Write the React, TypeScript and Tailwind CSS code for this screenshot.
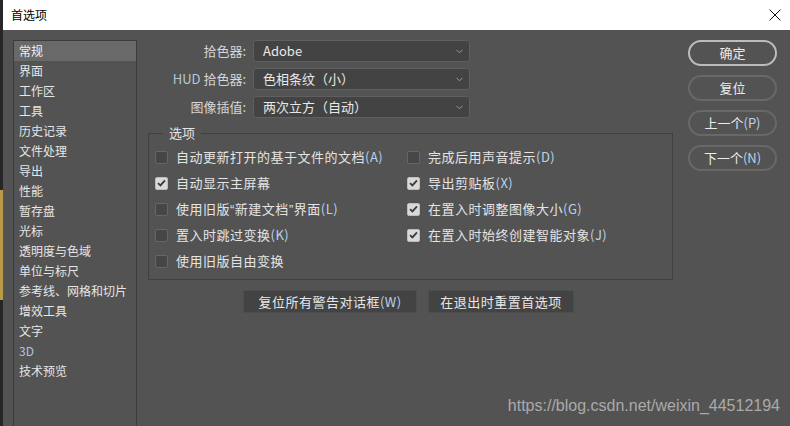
import React from "react";

const font = { fontFamily: '"Noto Sans CJK SC", "Noto Sans", sans-serif' };
const latin = { fontFamily: '"Liberation Sans", Arial, sans-serif' };

const sidebar = [
  "常规",
  "界面",
  "工作区",
  "工具",
  "历史记录",
  "文件处理",
  "导出",
  "性能",
  "暂存盘",
  "光标",
  "透明度与色域",
  "单位与标尺",
  "参考线、网格和切片",
  "增效工具",
  "文字",
  "3D",
  "技术预览",
];

const leftOpts: [React.ReactNode, string | null, boolean][] = [
  ["自动更新打开的基于文件的文档", "(A)", false],
  ["自动显示主屏幕", null, true],
  [
    <>
      使用旧版<span style={latin}>“</span>新建文档<span style={latin}>”</span>界面
    </>,
    "(L)",
    false,
  ],
  ["置入时跳过变换", "(K)", false],
  ["使用旧版自由变换", null, false],
];

const rightOpts: [React.ReactNode, string | null, boolean][] = [
  ["完成后用声音提示", "(D)", false],
  ["导出剪贴板", "(X)", true],
  ["在置入时调整图像大小", "(G)", true],
  ["在置入时始终创建智能对象", "(J)", true],
];

function Key({ k }: { k: string | null }) {
  if (!k) return null;
  return <span className="text-[#b9d2ec]">{k}</span>;
}

function Check({ label, k, on }: { label: React.ReactNode; k: string | null; on: boolean }) {
  return (
    <div className="flex items-center gap-[8px] h-[26px]">
      {on ? (
        <div className="w-[13px] h-[13px] rounded-[2px] bg-[#d9d9d9] border border-[#bdbdbd] flex items-center justify-center">
          <svg width="9" height="8" viewBox="0 0 9 8">
            <path d="M1 4.2 L3.4 6.4 L8 1.3" fill="none" stroke="#3a3a3a" strokeWidth="1.8" />
          </svg>
        </div>
      ) : (
        <div className="w-[13px] h-[13px] rounded-[2px] bg-[#464646] border border-[#666666]" />
      )}
      <span className="text-[13px] text-[#e4e4e4] tracking-[0.5px]">
        {label}
        <Key k={k} />
      </span>
    </div>
  );
}

function Select({ label, value }: { label: React.ReactNode; value: string }) {
  return (
    <div className="flex items-center h-[22px]">
      <div className="w-[99px] text-right text-[13px] text-[#d6d6d6] pr-[1px]">{label}</div>
      <div className="ml-[6px] w-[217px] h-[22px] rounded-[3px] bg-[#434343] border border-[#5f5f5f] flex items-center justify-between pl-[9px] pr-[6px]">
        <span className="text-[13px] text-[#e8e8e8]">{value}</span>
        <svg width="7" height="5" viewBox="0 0 7 5">
          <path d="M0.5 0.8 L3.5 3.8 L6.5 0.8" fill="none" stroke="#9a9a9a" strokeWidth="1" />
        </svg>
      </div>
    </div>
  );
}

function RoundBtn({ children, primary }: { children: React.ReactNode; primary?: boolean }) {
  return (
    <div
      className={
        "w-[89px] h-[26px] rounded-full border-2 flex items-center justify-center text-[13px] text-[#ececec] " +
        (primary ? "border-[#bcbcbc]" : "border-[#686868]")
      }
    >
      {children}
    </div>
  );
}

export default function App() {
  return (
    <div className="w-[790px] h-[426px] flex overflow-hidden relative" style={font}>
      <div className="w-[3px] h-full bg-[#262626] flex flex-col">
        <div className="h-[190px]" />
        <div className="h-[110px] bg-[#b89a4a]" />
      </div>
      <div className="flex-1 flex flex-col">
        {/* Title bar */}
        <div className="h-[30px] bg-white flex items-center justify-between pl-[8px] pr-[9px]">
          <span className="text-[12px] text-black">首选项</span>
          <svg width="12" height="12" viewBox="0 0 12 12">
            <path d="M0.5 0.5 L11.5 11.5 M11.5 0.5 L0.5 11.5" stroke="#111" strokeWidth="1" />
          </svg>
        </div>

        {/* Body */}
        <div className="flex-1 bg-[#535353] flex pt-[10px]">
          {/* Sidebar */}
          <div className="ml-[10px] w-[124px] border-l border-t border-r border-[#3c3c3c]">
            {sidebar.map((s, i) => (
              <div
                key={s}
                className={
                  "h-[20px] flex items-center pl-[5px] text-[12px] " +
                  (i === 0 ? "bg-[#696969] text-[#f0f0f0]" : s === "3D" ? "text-[#a9c6e6]" : "text-[#e6e6e6]")
                }
              >
                {s}
              </div>
            ))}
          </div>

          {/* Main */}
          <div className="ml-[11px] w-[525px] flex flex-col">
            <div className="flex flex-col gap-[6px]">
              <Select label="拾色器:" value="Adobe" />
              <Select
                label={
                  <>
                    <span className="text-[#b5c8dc]">HUD</span> 拾色器:
                  </>
                }
                value="色相条纹（小）"
              />
              <Select label="图像插值:" value="两次立方（自动）" />
            </div>

            <div className="relative mt-[15px] h-[147px] border border-[#404040] pt-[10px] pl-[6px] flex">
              <span className="absolute left-[14px] top-[-10px] px-[6px] bg-[#535353] text-[13px] text-[#e4e4e4] leading-[18px]">
                选项
              </span>
              <div className="w-[252px] flex flex-col">
                {leftOpts.map(([l, k, on], i) => (
                  <Check key={i} label={l} k={k} on={on} />
                ))}
              </div>
              <div className="flex flex-col">
                {rightOpts.map(([l, k, on], i) => (
                  <Check key={i} label={l} k={k} on={on} />
                ))}
              </div>
            </div>

            <div className="mt-[10px] ml-[95px] flex gap-[11px]">
              <div className="w-[174px] h-[23px] bg-[#434343] border border-[#4d4d4d] rounded-[2px] flex items-center justify-center text-[13px] text-[#e8e8e8] tracking-[0.5px]">
                复位所有警告对话框<Key k="(W)" />
              </div>
              <div className="w-[146px] h-[23px] bg-[#434343] border border-[#4d4d4d] rounded-[2px] flex items-center justify-center text-[13px] text-[#e8e8e8] tracking-[0.5px]">
                在退出时重置首选项
              </div>
            </div>
          </div>

          {/* Right buttons */}
          <div className="ml-[15px] flex flex-col gap-[9px]">
            <RoundBtn primary>确定</RoundBtn>
            <RoundBtn>复位</RoundBtn>
            <RoundBtn>
              上一个<Key k="(P)" />
            </RoundBtn>
            <RoundBtn>
              下一个<Key k="(N)" />
            </RoundBtn>
          </div>
        </div>
      </div>

      <span className="absolute right-[10px] bottom-[8px] text-[16px] text-[#aaaaaa]" style={latin}>
        https://blog.csdn.net/weixin_44512194
      </span>
    </div>
  );
}
